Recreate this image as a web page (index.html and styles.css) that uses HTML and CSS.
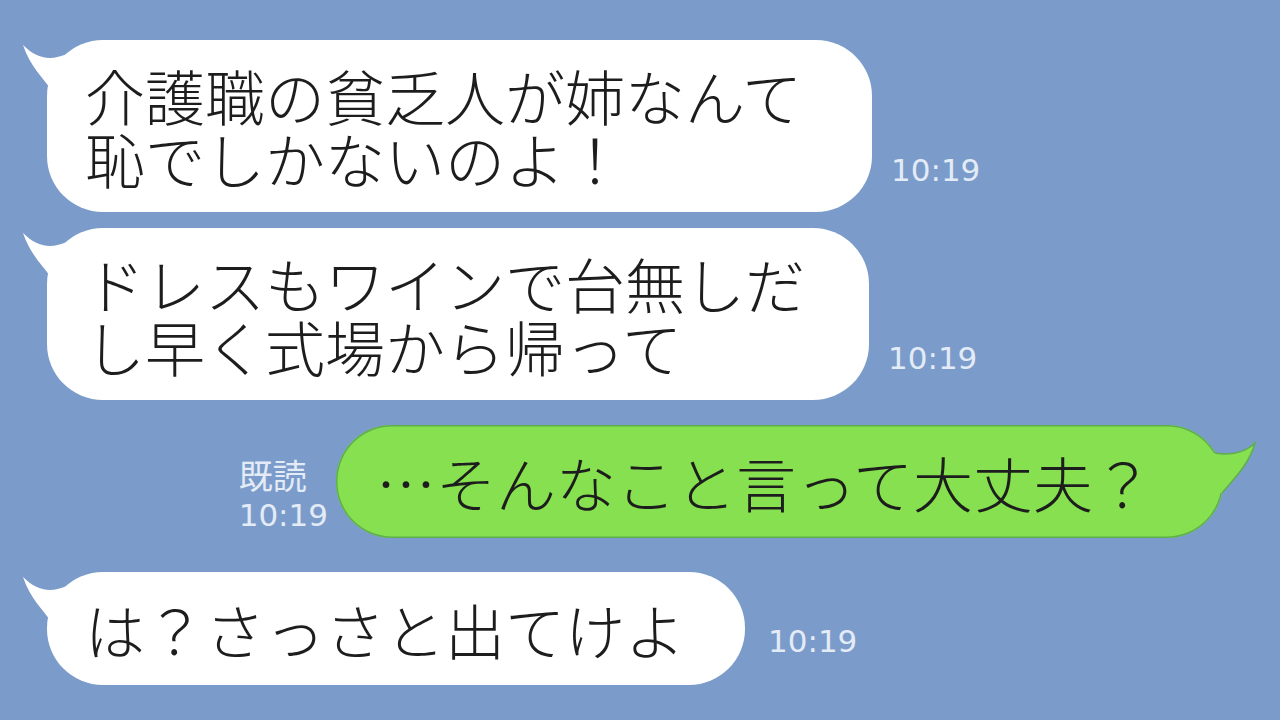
FILE: index.html
```html
<!DOCTYPE html>
<html lang="ja">
<head>
<meta charset="utf-8">
<title>トーク</title>
<link rel="stylesheet" href="styles.css">
</head>
<body>
<main class="chat">
  <div class="row row-in">
    <div class="bubble bubble-in wide">
      <svg class="tail tail-in" viewBox="-30 0 90 70" aria-hidden="true"><path d="M-24 5 C-16 13 -7 18 3 18 C14 18 26 11 40 4 L60 0 L60 70 L3 70 L3 48 C-4 38 -17 26 -24 5 Z"/></svg>
      <p class="text">介護職の貧乏人が姉なんて<br>恥でしかないのよ！</p>
    </div>
    <span class="time">10:19</span>
  </div>

  <div class="row row-in row-2">
    <div class="bubble bubble-in">
      <svg class="tail tail-in" viewBox="-30 0 90 70" aria-hidden="true"><path d="M-24 5 C-16 13 -7 18 3 18 C14 18 26 11 40 4 L60 0 L60 70 L3 70 L3 48 C-4 38 -17 26 -24 5 Z"/></svg>
      <p class="text">ドレスもワインで台無しだ<br>し早く式場から帰って</p>
    </div>
    <span class="time">10:19</span>
  </div>

  <div class="row row-out">
    <div class="status">
      <span class="read">既読</span>
      <span class="time-out">10:19</span>
    </div>
    <div class="bubble bubble-out single">
      <svg class="tail tail-out" viewBox="-30 0 70 80" aria-hidden="true">
        <path class="tail-fill" d="M-8 28 C2 30 20 30 32 18 C27 37 13 52 -1 68 L-24 68 L-24 28 Z"/>
        <path class="tail-edge" d="M-8 28 C2 30 20 30 32 18 C27 37 13 52 -1 68"/>
      </svg>
      <p class="text">…そんなこと言って大丈夫？</p>
    </div>
  </div>

  <div class="row row-in row-4">
    <div class="bubble bubble-in single short">
      <svg class="tail tail-in" viewBox="-30 0 90 70" aria-hidden="true"><path d="M-24 5 C-16 13 -7 18 3 18 C14 18 26 11 40 4 L60 0 L60 70 L3 70 L3 48 C-4 38 -17 26 -24 5 Z"/></svg>
      <p class="text">は？さっさと出てけよ</p>
    </div>
    <span class="time time-last">10:19</span>
  </div>
</main>
</body>
</html>
```

FILE: styles.css
```css
html, body {
  margin: 0;
  padding: 0;
}

body {
  width: 1280px;
  height: 720px;
  overflow: hidden;
  background: #7b9cca;
  font-family: "Noto Sans CJK JP Light", "Noto Sans CJK JP", "Noto Sans", sans-serif;
}

.chat {
  display: flex;
  flex-direction: column;
  padding: 40px 57px 0 47px;
}

.row {
  display: flex;
  align-items: flex-end;
}

.row-2 {
  margin-top: 16px;
}

.row-out {
  justify-content: flex-end;
  margin-top: 25px;
}

.row-4 {
  margin-top: 34px;
}

/* speech bubbles */
.bubble {
  position: relative;
  padding: 23px 64px 23px 38px;
  border-radius: 56px;
}

.bubble.wide {
  padding-right: 70px;
}

.bubble.short {
  padding-right: 60px;
}

.bubble.single {
  padding-top: 25px;
  padding-bottom: 25px;
}

.bubble-in {
  background: #ffffff;
}

.bubble-out {
  padding-left: 40px;
  padding-right: 70px;
  background: #86e04f;
  box-shadow: inset 0 0 0 1.5px #5fae4c;
}

.text {
  position: relative;
  margin: 0;
  font-size: 60px;
  font-weight: 300;
  line-height: 63px;
  color: #1d1d1d;
  white-space: nowrap;
}

/* bubble tails */
.tail {
  position: absolute;
  top: 0;
  overflow: visible;
}

.tail-in {
  left: -30px;
  width: 90px;
  height: 70px;
  fill: #ffffff;
}

.tail-out {
  left: calc(100% - 30px);
  width: 70px;
  height: 80px;
}

.tail-fill {
  fill: #86e04f;
}

.tail-edge {
  fill: none;
  stroke: #5fae4c;
  stroke-width: 1.5;
}

/* timestamps */
.time {
  margin: 0 0 23px 19px;
  font-family: "DejaVu Sans", sans-serif;
  font-size: 31px;
  line-height: 38px;
  color: #e3ebf6;
}

.time-last {
  margin-bottom: 25px;
  margin-left: 23px;
}

.status {
  display: flex;
  flex-direction: column;
  align-items: flex-start;
  margin: 0 8px 3px 0;
  color: #e3ebf6;
  line-height: 40px;
}

.read {
  font-family: "Noto Sans CJK JP", sans-serif;
  font-size: 34px;
}

.time-out {
  font-family: "DejaVu Sans", sans-serif;
  font-size: 31px;
}
```
